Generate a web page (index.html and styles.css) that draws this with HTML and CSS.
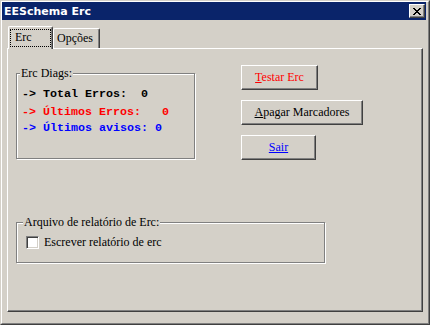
FILE: index.html
```html
<!DOCTYPE html>
<html lang="pt">
<head>
    <meta charset="UTF-8">
    <title>EESchema Erc</title>
    <link rel="stylesheet" href="styles.css">
</head>
<body>
    <div class="window">
        <div class="frame">
            <div class="titlebar">
                <span class="title">EESchema Erc</span>
                <button class="close">
                    <svg width="8" height="7" viewBox="0 0 8 7" shape-rendering="crispEdges">
                        <path d="M0 0h2v1H0zM6 0h2v1H6zM1 1h2v1H1zM5 1h2v1H5zM2 2h4v1H2zM3 3h2v1H3zM2 4h4v1H2zM1 5h2v1H1zM5 5h2v1H5zM0 6h2v1H0zM6 6h2v1H6z" fill="#000"/>
                    </svg>
                </button>
            </div>

            <div class="tabs">
                <div class="tab active"><span class="tab-label">Erc</span></div>
                <div class="tab">Opções</div>
            </div>

            <div class="panel">
                <div class="top-row">
                    <div class="group diags">
                        <div class="legend"><span>Erc Diags:</span></div>
                        <div class="diag total">-&gt; Total Erros:  0</div>
                        <div class="diag last-errors">-&gt; Últimos Erros:   0</div>
                        <div class="diag last-warnings">-&gt; Últimos avisos: 0</div>
                    </div>

                    <div class="buttons">
                        <button class="btn btn-test"><u>T</u>estar Erc</button>
                        <button class="btn btn-clear"><u>A</u>pagar Marcadores</button>
                        <button class="btn btn-exit"><u>Sair</u></button>
                    </div>
                </div>

                <!-- arquivo de relatório -->
                <div class="group report">
                    <div class="legend"><span>Arquivo de relatório de Erc:</span></div>
                    <label class="check-row">
                        <span class="checkbox"></span>
                        <span>Escrever relatório de erc</span>
                    </label>
                </div>
            </div>
        </div>
    </div>
</body>
</html>
```

FILE: styles.css
```css
body, html {
    margin: 0;
    padding: 0;
    background-color: #d4d0c8;
    font-family: "Liberation Serif", "Times New Roman", serif;
    font-size: 12px;
}

.window {
    width: 430px;
    height: 325px;
    box-sizing: border-box;
    border: 1px solid;
    border-color: #d4d0c8 #404040 #404040 #d4d0c8;
    background-color: #d4d0c8;
}

.frame {
    height: 100%;
    box-sizing: border-box;
    border: 1px solid;
    border-color: #fff #808080 #808080 #fff;
}

.titlebar {
    height: 18px;
    margin-right: 2px;
    padding: 0 1px 0 2px;
    background-color: #0a246a;
    display: flex;
    align-items: center;
    justify-content: space-between;
}

.title {
    color: #fff;
    font-family: "DejaVu Sans", Verdana, sans-serif;
    font-weight: bold;
    font-size: 11px;
}

.close {
    width: 16px;
    height: 14px;
    box-sizing: border-box;
    padding: 0;
    margin: 0;
    border: 1px solid;
    border-color: #fff #404040 #404040 #fff;
    box-shadow: inset -1px -1px 0 #808080;
    background-color: #d4d0c8;
    display: flex;
    align-items: center;
    justify-content: center;
}

.tabs {
    display: flex;
    align-items: flex-end;
    height: 23px;
    margin: 6px 0 -1px 6px;
    position: relative;
    z-index: 1;
}

.tab {
    width: 47px;
    height: 20px;
    box-sizing: border-box;
    margin-bottom: 1px;
    padding: 2px 0 0 3px;
    line-height: 15px;
    background-color: #d4d0c8;
    border-top: 1px solid #fff;
    border-left: 1px solid #fff;
    border-right: 1px solid #404040;
    box-shadow: inset -1px 0 0 #808080;
    border-radius: 2px 2px 0 0;
}

.tab.active {
    width: 45px;
    height: 23px;
    margin-bottom: 0;
    padding: 2px 1px 0 1px;
}

.tab-label {
    display: block;
    height: 18px;
    box-sizing: border-box;
    border: 1px dotted #000;
    padding-left: 4px;
    line-height: 15px;
}

.panel {
    height: 264px;
    margin: 0 5px;
    box-sizing: border-box;
    border: 1px solid;
    border-color: #fff #404040 #404040 #fff;
    box-shadow: inset -1px -1px 0 #808080;
    padding: 16px 0 0 8px;
}

.top-row {
    display: flex;
    align-items: flex-start;
}

.group {
    box-sizing: border-box;
    border: 1px solid #808080;
    box-shadow: 1px 1px 0 #fff, inset 1px 1px 0 #fff;
}

.legend {
    height: 15px;
    margin-top: -8px;
    line-height: 15px;
}

.legend span {
    display: inline-block;
    padding: 0 1px;
    background-color: #d4d0c8;
}

.diags {
    width: 179px;
    height: 86px;
    margin-top: 8px;
}

.diags .legend span {
    margin-left: 3px;
}

.diag {
    font-family: "Liberation Mono", "Courier New", monospace;
    font-weight: bold;
    font-size: 11.67px;
    line-height: 16px;
    white-space: pre;
    padding-left: 5px;
}

.total {
    margin-top: 5px;
    color: #000;
}

.last-errors {
    margin-top: 2px;
    color: #ff0000;
}

.last-warnings {
    color: #0000ff;
}

.buttons {
    margin-left: 46px;
    display: flex;
    flex-direction: column;
    align-items: flex-start;
    gap: 10px;
}

.btn {
    height: 25px;
    box-sizing: border-box;
    padding: 0;
    margin: 0;
    border: 1px solid;
    border-color: #fff #404040 #404040 #fff;
    box-shadow: inset -1px -1px 0 #808080;
    background-color: #d4d0c8;
    font-family: "Liberation Serif", "Times New Roman", serif;
    font-size: 12px;
    color: #000;
    text-align: center;
}

.btn-test {
    width: 77px;
    color: #ff0000;
}

.btn-clear {
    width: 122px;
}

.btn-exit {
    width: 75px;
    color: #0000ff;
}

.report {
    width: 309px;
    height: 41px;
    margin-top: 62px;
}

.report .legend span {
    margin-left: 6px;
}

.check-row {
    display: flex;
    align-items: center;
    gap: 5px;
    margin: 5px 0 0 9px;
    line-height: 15px;
}

.checkbox {
    width: 13px;
    height: 13px;
    box-sizing: border-box;
    border: 1px solid;
    border-color: #808080 #fff #fff #808080;
    box-shadow: inset 1px 1px 0 #404040, inset -1px -1px 0 #d4d0c8;
    background-color: #fff;
}
```
